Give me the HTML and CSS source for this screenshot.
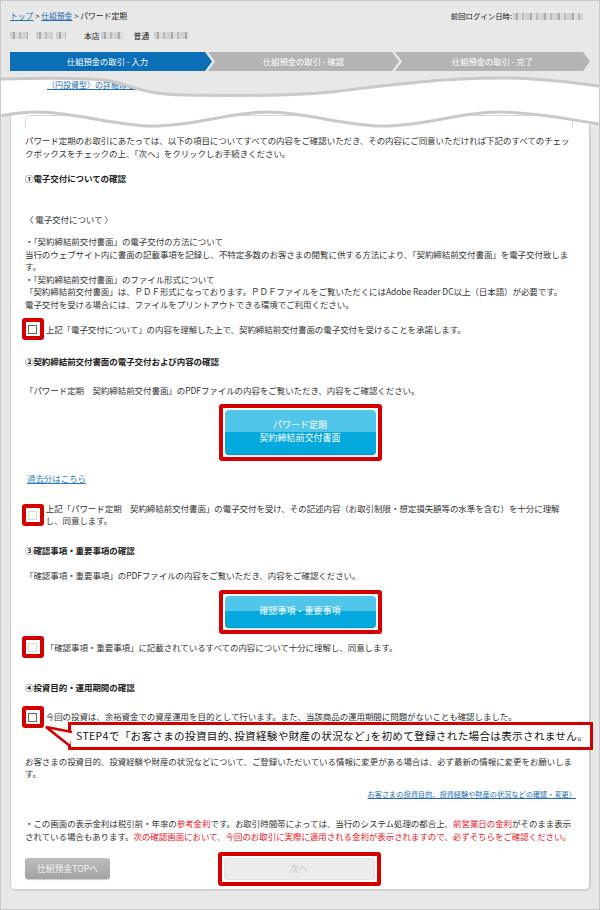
FILE: index.html
```html
<!DOCTYPE html>
<html lang="ja">
<head>
<meta charset="utf-8">
<title>パワード定期</title>
<link rel="stylesheet" href="styles.css">
</head>
<body>
<div class="page">
  <div class="top">
    <div class="crumbs">
      <div class="path"><a href="#">トップ</a>&nbsp;&gt;&nbsp;<a href="#">仕組預金</a>&nbsp;&gt;&nbsp;パワード定期</div>
      <div class="login">前回ログイン日時:<span class="blur b-login"></span></div>
    </div>
    <div class="acct">
      <span class="blur b1"></span><span class="blur b2"></span><span class="blur b3"></span>
      <span class="branch">本店</span><span class="blur b4"></span>
      <span class="kind">普通</span><span class="blur b5"></span>
    </div>
    <div class="steps">
      <div class="step step1">仕組預金の取引 - 入力</div>
      <div class="step step2">仕組預金の取引 - 確認</div>
      <div class="step step3">仕組預金の取引 - 完了</div>
    </div>
  </div>

  <div class="cut">
    <a href="#">（円投資型）の詳細はこちら</a>
    <svg viewBox="1 0 598 57" preserveAspectRatio="none" aria-hidden="true">
      <defs>
        <clipPath id="lowclip">
          <path d="M0,45 C15,42 25,41 38,41 C75,41 115,55 153,55 C195,55 230,41 268,41 C305,41 345,55 383,55 C425,55 460,41 498,41 C540,41 575,50 600,53 L600,60 L0,60 Z"/>
        </clipPath>
      </defs>
      <path fill="#e8e8e8" d="M0,-1 L600,-1 L600,15 C575,12 545,7 500,7 C440,7 380,15 340,20 C300,25 240,25 185,24 C140,23 128,13 110,10 C85,6 40,7 0,8 Z"/>
      <g clip-path="url(#lowclip)">
        <rect x="0" y="0" width="600" height="60" fill="#e8e8e8"/>
        <rect x="10.5" y="0" width="579" height="70" fill="#fff" stroke="#d0d0d0"/>
        <rect x="25.5" y="44.5" width="547" height="20" rx="4" fill="#fff" stroke="#d6d6d6"/>
      </g>
      <path fill="none" stroke="#c9c9c9" stroke-width="3" d="M0,8 C40,7 85,6 110,10 C128,13 140,23 185,24 C240,25 300,25 340,20 C380,15 440,7 500,7 C545,7 575,12 600,15"/>
      <path fill="none" stroke="#c9c9c9" stroke-width="3" d="M0,45 C15,42 25,41 38,41 C75,41 115,55 153,55 C195,55 230,41 268,41 C305,41 345,55 383,55 C425,55 460,41 498,41 C540,41 575,50 600,53"/>
    </svg>
  </div>

  <div class="card">
    <p class="intro">パワード定期のお取引にあたっては、以下の項目についてすべての内容をご確認いただき、その内容にご同意いただければ下記のすべてのチェッ<br>クボックスをチェックの上、「次へ」をクリックしお手続きください。</p>

    <h2 class="sec s1">①電子交付についての確認</h2>
    <p class="sub">〈 電子交付について 〉</p>
    <p class="bullets">・「契約締結前交付書面」の電子交付の方法について<br>当行のウェブサイト内に書面の記載事項を記録し、不特定多数のお客さまの閲覧に供する方法により、「契約締結前交付書面」を電子交付致しま<br>す。<br>・「契約締結前交付書面」のファイル形式について<br>「契約締結前交付書面」は、ＰＤＦ形式になっております。ＰＤＦファイルをご覧いただくにはAdobe Reader DC以上（日本語）が必要です。<br>電子交付を受ける場合には、ファイルをプリントアウトできる環境でご利用ください。</p>

    <div class="agree a1">
      <span class="mark"><span class="box"></span></span>
      <span class="label">上記「電子交付について」の内容を理解した上で、契約締結前交付書面の電子交付を受けることを承諾します。</span>
    </div>

    <h2 class="sec s2">②契約締結前交付書面の電子交付および内容の確認</h2>
    <p class="lead l2">「パワード定期　契約締結前交付書面」のPDFファイルの内容をご覧いただき、内容をご確認ください。</p>
    <div class="btnrow r1">
      <div class="frame"><a href="#" class="pdf tall"><span>パワード定期</span><span>契約締結前交付書面</span></a></div>
    </div>
    <p class="past"><a href="#">過去分はこちら</a></p>

    <div class="agree a2">
      <span class="mark"><span class="box off"></span></span>
      <span class="label">上記「パワード定期　契約締結前交付書面」の電子交付を受け、その記述内容（お取引制限・想定損失額等の水準を含む）を十分に理解<br>し、同意します。</span>
    </div>

    <h2 class="sec s3">③確認事項・重要事項の確認</h2>
    <p class="lead l3">「確認事項・重要事項」のPDFファイルの内容をご覧いただき、内容をご確認ください。</p>
    <div class="btnrow r2">
      <div class="frame"><a href="#" class="pdf short"><span>確認事項・重要事項</span></a></div>
    </div>
    <div class="agree a3">
      <span class="mark"><span class="box off"></span></span>
      <span class="label">「確認事項・重要事項」に記載されているすべての内容について十分に理解し、同意します。</span>
    </div>

    <h2 class="sec s4">④投資目的・運用期間の確認</h2>
    <div class="agree a4">
      <span class="mark"><span class="box"></span></span>
      <span class="label">今回の投資は、余裕資金での資産運用を目的として行います。また、当該商品の運用期間に問題がないことも確認しました。</span>
    </div>
    <div class="callout">
      <svg class="tail" viewBox="0 0 30 30" aria-hidden="true">
        <polygon points="2,5 28,10 26,24" fill="#fff"/>
        <polyline points="28,10 2,5 26,24" fill="none" stroke="#d40000" stroke-width="2.6" stroke-linejoin="miter"/>
      </svg>
      STEP4で「お客さまの投資目的､投資経験や財産の状況など｣を初めて登録された場合は表示されません。
    </div>
    <p class="change">お客さまの投資目的、投資経験や財産の状況などについて、ご登録いただいている情報に変更がある場合は、必ず最新の情報に変更をお願いしま<br>す。</p>
    <p class="more"><a href="#">お客さまの投資目的、投資経験や財産の状況などの確認・変更〉</a></p>

    <p class="notes">・この画面の表示金利は税引前・年率の<span class="red">参考金利</span>です。お取引時間帯によっては、当行のシステム処理の都合上、<span class="red">前営業日の金利</span>がそのまま表示<br>されている場合もあります。<span class="red">次の確認画面において、今回のお取引に実際に適用される金利が表示されますので、必ずそちらをご確認ください。</span></p>

    <div class="actions">
      <a href="#" class="topbtn">仕組預金TOPへ</a>
      <div class="frame next-frame"><span class="next">次へ</span></div>
    </div>
  </div>
</div>
</body>
</html>
```

FILE: styles.css
```css
* {
  box-sizing: border-box;
  margin: 0;
  padding: 0;
}

body {
  margin: 0;
  font-family: "Noto Sans CJK JP", "Noto Sans", sans-serif;
  color: #333;
}

a {
  color: #1d6cb4;
  text-decoration: underline;
}

.page {
  width: 600px;
  height: 910px;
  border: 1px solid #c9c9c9;
  background: #e8e8e8;
  overflow: hidden;
}

/* header */
.top {
  padding: 9px 16px 0 9px;
}

.crumbs {
  display: flex;
  justify-content: space-between;
  height: 12px;
  line-height: 12px;
  font-size: 7.8px;
  color: #222;
}

.login {
  display: flex;
  align-items: center;
  font-size: 7.4px;
  color: #111;
}

.blur {
  display: inline-block;
  height: 7px;
  background: repeating-linear-gradient(90deg, #cfcfcf 0 3px, #a9a9a9 3px 5px, #dcdcdc 5px 9px, #bababa 9px 11px, #d6d6d6 11px 14px);
  filter: blur(0.7px);
}

.b-login { width: 70px; margin-left: 1px; }

.acct {
  margin-top: 7px;
  height: 12px;
  display: flex;
  align-items: center;
  font-size: 7.8px;
  color: #222;
}

.b1 { width: 18px; }
.b2 { width: 17px; margin-left: 8px; }
.b3 { width: 10px; margin-left: 3px; }
.branch { margin-left: 18px; }
.b4 { width: 22px; margin-left: 1px; }
.kind { margin-left: 11px; }
.b5 { width: 35px; margin-left: 5px; }

.steps {
  display: flex;
  margin-top: 11px;
  height: 19px;
}

.step {
  flex-shrink: 0;
  height: 19px;
  line-height: 19px;
  color: #fff;
  font-size: 8.3px;
  text-align: center;
  background: #b4b4b4;
}

.step1 {
  width: 202px;
  background: #0b6fb7;
  padding-right: 7px;
  clip-path: polygon(0 0, 195px 0, 202px 50%, 195px 100%, 0 100%);
}

.step2 {
  width: 191px;
  margin-left: -4px;
  padding: 0 7px;
  clip-path: polygon(0 0, 184px 0, 191px 50%, 184px 100%, 0 100%, 7px 50%);
}

.step3 {
  width: 195px;
  margin-left: -4px;
  padding: 0 7px;
  clip-path: polygon(0 0, 188px 0, 195px 50%, 188px 100%, 0 100%, 7px 50%);
}

/* torn edge */
.cut {
  position: relative;
  height: 57px;
  background: #fff;
  padding: 8px 0 0 46px;
  font-size: 8px;
  line-height: 12px;
}

.cut svg {
  position: absolute;
  left: 0;
  top: 0;
  width: 598px;
  height: 57px;
}

/* main card */
.card {
  margin: 0 9px;
  background: #fff;
  border: 1px solid #cfcfcf;
  border-top: none;
  border-radius: 0 0 5px 5px;
  box-shadow: 1px 1px 1px rgba(0, 0, 0, 0.1);
  padding: 6px 16px 3px 14px;
  font-size: 8.5px;
  line-height: 12.5px;
  letter-spacing: -0.07px;
  color: #333;
}

.card p,
.card h2,
.label {
  white-space: nowrap;
}

.sec {
  font-size: 8.5px;
  font-weight: bold;
  color: #222;
}

.s1 { margin-top: 13px; }
.sub { margin-top: 28px; }
.bullets { margin-top: 10px; }
.a1 { margin-top: 8px; }
.s2 { margin-top: 14.5px; }
.l2 { margin-top: 16.5px; }
.r1 { margin-top: 7.75px; }
.past { margin-top: 11px; padding-left: 2px; }
.past a { color: #2a7cc7; }
.a2 { margin-top: 19.5px; align-items: flex-start; }
.a2 .label { line-height: 11.8px; margin-top: -1px; }
.s3 { margin-top: 18px; }
.l3 { margin-top: 12.5px; }
.r2 { margin-top: 8.2px; }
.a3 { margin-top: 2.3px; }
.s4 { margin-top: 22.75px; }
.a4 { margin-top: 12.5px; align-items: flex-start; }
.a4 .label { margin-top: -2px; }

/* agree rows */
.agree {
  display: flex;
  align-items: center;
  margin-left: -3.3px;
}

.mark {
  flex-shrink: 0;
  width: 22px;
  height: 22px;
  border: 4px solid #d40000;
  border-radius: 3px;
  background: #fff;
  display: flex;
  align-items: center;
  justify-content: center;
}

.box {
  width: 9px;
  height: 9px;
  border: 1px solid #666;
  background: #fff;
}

.box.off {
  border-color: #d9d9d9;
}

.label {
  margin-left: 2px;
}

/* buttons */
.btnrow {
  display: flex;
  justify-content: center;
  padding-left: 2px;
}

.frame {
  border: 4px solid #d40000;
  border-radius: 3px;
  padding: 2px;
  background: #fff;
}

.pdf {
  width: 151px;
  display: flex;
  flex-direction: column;
  align-items: center;
  justify-content: center;
  color: #fff;
  text-decoration: none;
  font-size: 9px;
  line-height: 12.3px;
  letter-spacing: 0;
  border-radius: 4px;
  background: linear-gradient(to bottom, #52c5ea 0, #52c5ea 50%, #03a8dd 50%, #03a8dd 100%);
  border-bottom: 1px solid #0b93c3;
  box-shadow: 0 1px 1px rgba(0, 0, 0, 0.12);
}

.pdf.tall { height: 45px; }
.pdf.short { height: 32px; }

/* callout */
.callout {
  position: relative;
  margin: -5.75px -20px 0 43px;
  height: 28px;
  border: 3px solid #d40000;
  background: #fff;
  padding-left: 5px;
  font-size: 10.6px;
  line-height: 22px;
  letter-spacing: 0.3px;
  color: #111;
  white-space: nowrap;
}

.tail {
  position: absolute;
  left: -27px;
  top: -3px;
  width: 30px;
  height: 30px;
  overflow: visible;
}

.change { margin-top: 4.5px; }

.more {
  margin-top: 8.5px;
  margin-right: -3px;
  text-align: right;
  font-size: 7.2px;
  line-height: 12px;
  letter-spacing: 0;
}

.notes { margin-top: 16.75px; }

.red { color: #f0141e; }

/* bottom actions */
.actions {
  display: grid;
  grid-template-columns: 1fr auto 1fr;
  align-items: center;
  margin-top: 9.5px;
}

.topbtn {
  justify-self: start;
  width: 85px;
  height: 21px;
  line-height: 21px;
  text-align: center;
  font-size: 8.8px;
  letter-spacing: 0;
  color: #f2f2f2;
  text-decoration: none;
  border-radius: 3px;
  background: linear-gradient(to bottom, #bdbdbd, #a3a3a3);
  box-shadow: 0 1px 1px rgba(0, 0, 0, 0.2);
}

.next-frame {
  grid-column: 2;
}

.next {
  display: block;
  width: 151px;
  height: 22px;
  line-height: 20px;
  text-align: center;
  font-size: 9px;
  color: #c8c8c8;
  background: #ececec;
  border: 1px solid #e2e2e2;
  border-radius: 3px;
}
```
